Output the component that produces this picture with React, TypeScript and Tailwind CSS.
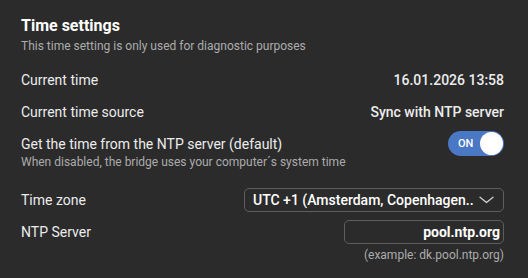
function Toggle({ on }: { on: boolean }) {
  return (
    <button className="relative mt-[-3px] flex h-[25px] w-[56px] shrink-0 items-center rounded-full bg-[#4a78c4] pl-[10px]">
      <span className="text-[11px] font-medium leading-none text-white">{on ? "ON" : "OFF"}</span>
      <span className="absolute right-[1px] top-[1px] h-[23px] w-[23px] rounded-full bg-white" />
    </button>
  );
}

export default function App() {
  return (
    <div
      className="h-[278px] w-[528px] bg-[#2b2b2b] pl-[21px] pr-[24px] pt-[16px] text-[#ececec]"
      style={{ fontFamily: "Roboto, 'Liberation Sans', sans-serif" }}
    >
      <h1 className="text-[16px] font-bold leading-5 text-white">Time settings</h1>
      <p className="mt-[2px] text-[12px] leading-4 text-[#ababab]">
        This time setting is only used for diagnostic purposes
      </p>

      <div className="mt-[10px] flex h-8 items-center justify-between text-[14px]">
        <span>Current time</span>
        <span className="font-medium">16.01.2026 13:58</span>
      </div>
      <div className="flex h-8 items-center justify-between text-[14px]">
        <span>Current time source</span>
        <span className="font-medium">Sync with NTP server</span>
      </div>

      <div className="flex items-start justify-between pt-[6px]">
        <div>
          <div className="text-[14px] leading-5">Get the time from the NTP server (default)</div>
          <div className="text-[12px] leading-4 text-[#ababab]">
            When disabled, the bridge uses your computer´s system time
          </div>
        </div>
        <Toggle on />
      </div>

      <div className="mt-[18px] flex h-6 items-center justify-between text-[14px]">
        <span>Time zone</span>
        <div className="flex h-6 w-[260px] items-center justify-between rounded-[5px] border border-[#5e5e5e] pl-[8px] pr-[8px]">
          <span className="font-medium text-white">UTC +1 (Amsterdam, Copenhagen..</span>
          <svg width="15" height="8" viewBox="0 0 15 8" fill="none" className="mr-[1px]">
            <path d="M1 1.2 7.5 6.5 14 1.2" stroke="#d0d0d0" strokeWidth="1.3" strokeLinecap="round" strokeLinejoin="round" />
          </svg>
        </div>
      </div>

      <div className="mt-[8px] flex h-6 items-center justify-between text-[14px]">
        <span>NTP Server</span>
        <div className="flex h-6 w-[160px] items-center justify-end rounded-[5px] border border-[#5e5e5e] pr-[3px]">
          <span className="font-bold text-white">pool.ntp.org</span>
        </div>
      </div>
      <div className="mt-[3px] text-right text-[12px] leading-4 text-[#ababab]">
        (example: dk.pool.ntp.org)
      </div>
    </div>
  );
}
